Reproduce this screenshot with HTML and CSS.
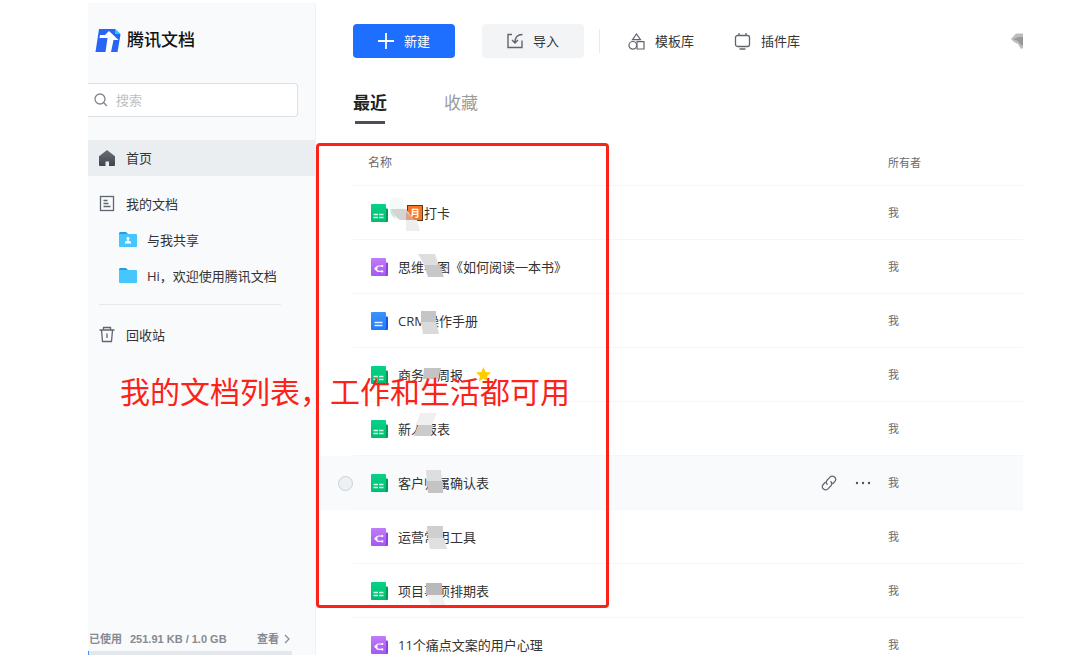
FILE: index.html
```html
<!DOCTYPE html>
<html lang="zh-CN">
<head>
<meta charset="utf-8">
<title>腾讯文档</title>
<link rel="stylesheet" href="styles.css">
</head>
<body>
<svg class="defs" aria-hidden="true">
  <defs>
    <linearGradient id="g-green" x1="0" y1="0" x2="0" y2="1"><stop offset="0" stop-color="#08d288"/><stop offset="1" stop-color="#00bd70"/></linearGradient>
    <linearGradient id="g-purple" x1="0" y1="0" x2="0" y2="1"><stop offset="0" stop-color="#c07bfb"/><stop offset="1" stop-color="#a558f2"/></linearGradient>
    <linearGradient id="g-blue" x1="0" y1="0" x2="0" y2="1"><stop offset="0" stop-color="#3c93ff"/><stop offset="1" stop-color="#217afa"/></linearGradient>
    <linearGradient id="g-home" x1="0" y1="0" x2="0" y2="1"><stop offset="0" stop-color="#6b7079"/><stop offset="1" stop-color="#3f444d"/></linearGradient>
    <symbol id="sheet" viewBox="0 0 17 18">
      <path d="M14 4.500h2a1 1 0 0 1 1 1V17a1 1 0 0 1-1 1H9z" fill="#009c57"/>
      <path d="M1 0h13a1 1 0 0 1 1 1v16l-1 1H1a1 1 0 0 1-1-1V1a1 1 0 0 1 1-1z" fill="url(#g-green)"/>
      <path d="M2.500 10.500h4.500M8 10.500h4.500M2.500 13.500h4.500M8 13.500h4.500" stroke="#d5fbe8" stroke-width="1.700"/>
    </symbol>
    <symbol id="mind" viewBox="0 0 17 18">
      <path d="M14 4.500h2a1 1 0 0 1 1 1V17a1 1 0 0 1-1 1H9z" fill="#8c41dc"/>
      <path d="M1 0h13a1 1 0 0 1 1 1v16l-1 1H1a1 1 0 0 1-1-1V1a1 1 0 0 1 1-1z" fill="url(#g-purple)"/>
      <path d="M11 8H8a2.700 2.700 0 0 0 0 5.400h3" fill="none" stroke="#fff" stroke-width="1.200"/>
      <circle cx="5" cy="10.700" r="1.600" fill="#fff"/><circle cx="11.300" cy="8" r="1.100" fill="#fff"/><circle cx="11.300" cy="13.400" r="1.100" fill="#fff"/>
    </symbol>
    <symbol id="doc" viewBox="0 0 17 18">
      <path d="M14 4.500h2a1 1 0 0 1 1 1V17a1 1 0 0 1-1 1H9z" fill="#1259e6"/>
      <path d="M1 0h13a1 1 0 0 1 1 1v16l-1 1H1a1 1 0 0 1-1-1V1a1 1 0 0 1 1-1z" fill="url(#g-blue)"/>
      <path d="M3.500 10.500h8M3.500 13.500h8" stroke="#e3f0ff" stroke-width="1.400"/>
    </symbol>
  </defs>
</svg>
<div class="app">
  <aside class="sidebar">
    <a class="brand" href="#">
      <svg width="27" height="25" viewBox="0 0 27 25" aria-hidden="true">
        <path d="M4 1h16l5.500 5.500L22.500 24H.5z" fill="#2864f5"/>
        <path d="M20 1l5.500 5H20z" fill="#12d5e8"/>
        <path d="M14 3l9.500 9h-5L16 24h-5.500l2-14H4.500l.5-3h5z" fill="#fff"/>
      </svg>
      <span>腾讯文档</span>
    </a>
    <label class="search">
      <svg width="14" height="14" viewBox="0 0 14 14" fill="none" stroke="#80858e" stroke-width="1.300" aria-hidden="true"><circle cx="6" cy="6" r="5"/><path d="M9.700 9.700l3.300 3.300"/></svg>
      <input type="text" placeholder="搜索" aria-label="搜索">
    </label>
    <nav class="nav">
      <a class="nav-item active" href="#">
        <svg width="18" height="18" viewBox="0 0 18 18" aria-hidden="true"><path d="M9 1l8 6.300V16a1 1 0 0 1-1 1h-5v-4.500H7.500V17H2a1 1 0 0 1-1-1V7.300z" fill="url(#g-home)"/></svg>
        首页
      </a>
      <a class="nav-item" href="#">
        <svg width="18" height="18" viewBox="0 0 18 18" fill="none" stroke="#60656f" stroke-width="1.300" aria-hidden="true"><rect x="2.500" y="1.500" width="13" height="14"/><path d="M5.500 5.500h4M5.500 8.500h5M5.500 11.500h7"/></svg>
        我的文档
      </a>
      <a class="nav-item child" href="#">
        <svg width="18" height="18" viewBox="0 0 18 18" aria-hidden="true"><path d="M1 1h6l2 2v4H0V2z" fill="#1b9df0"/><path d="M0 3h17a1 1 0 0 1 1 1V15a1 1 0 0 1-1 1H1a1 1 0 0 1-1-1z" fill="#45c6fd"/><circle cx="9" cy="7.500" r="1.400" fill="#fff"/><path d="M8.300 8h1.400v1.700l2.300 1V12.500H6V10.700l2.300-1z" fill="#fff"/></svg>
        与我共享
      </a>
      <a class="nav-item child" href="#">
        <svg width="18" height="18" viewBox="0 0 18 18" aria-hidden="true"><path d="M1 1h6l2 2v4H0V2z" fill="#1b9df0"/><path d="M0 3h17a1 1 0 0 1 1 1V15a1 1 0 0 1-1 1H1a1 1 0 0 1-1-1z" fill="#45c6fd"/></svg>
        Hi，欢迎使用腾讯文档
      </a>
      <hr class="nav-line">
      <a class="nav-item" href="#">
        <svg width="18" height="18" viewBox="0 0 18 18" fill="none" stroke="#60656f" stroke-width="1.300" aria-hidden="true"><path d="M1.500 4h15M5.500 4V1.500h7V4M3.500 4l1 11.500h9l1-11.500M9 7.500V12"/></svg>
        回收站
      </a>
    </nav>
    <div class="usage">
      <div class="usage-row">
        <label for="quota">已使用</label>
        <span>251.91 KB / 1.0 GB</span>
        <a class="usage-link" href="#">查看
          <svg width="6" height="10" viewBox="0 0 6 10" fill="none" stroke="#858a93" stroke-width="1.200" aria-hidden="true"><path d="M1 1l4 4-4 4"/></svg>
        </a>
      </div>
      <progress id="quota" class="quota" value="1" max="204"></progress>
    </div>
  </aside>
  <main class="main">
    <header class="toolbar">
      <button class="btn primary" type="button">
        <svg width="16" height="16" viewBox="0 0 16 16" stroke="#fff" stroke-width="1.800" aria-hidden="true"><path d="M8 0v16M0 8h16"/></svg>
        新建
      </button>
      <button class="btn" type="button">
        <svg width="16" height="16" viewBox="0 0 16 16" fill="none" stroke="#60656f" stroke-width="1.400" aria-hidden="true"><path d="M5 1.500H1v13h14V7.500M15.500 1.500C11 1.500 8 3.500 8 9.500M5 7l3 3 3-3"/></svg>
        导入
      </button>
      <span class="split"></span>
      <button class="tool" type="button">
        <svg width="17" height="17" viewBox="0 0 17 17" fill="none" stroke="#60656f" stroke-width="1.200" aria-hidden="true"><path d="M8.500 1l4 5.700h-8zM9 8.700h7V16H9z"/><circle cx="4.800" cy="12.300" r="3.800" fill="#fff"/></svg>
        模板库
      </button>
      <button class="tool" type="button">
        <svg width="17" height="17" viewBox="0 0 17 17" fill="none" stroke="#60656f" stroke-width="1.300" aria-hidden="true"><rect x="1.500" y="2.500" width="14" height="11" rx="2"/><path d="M5 0v3M12 0v3M5.500 16h6"/></svg>
        插件库
      </button>
      <svg class="avatar" width="12" height="16" viewBox="0 0 12 16" aria-hidden="true"><path d="M0 6l5-5.500h7V15l-2 1-3-5-4-2z" fill="#bdbdbd"/><path d="M2 6l6-2h4v9l-3-2-2-3z" fill="#999"/></svg>
    </header>
    <div class="tabs">
      <button class="tab current" type="button">最近</button>
      <button class="tab" type="button">收藏</button>
    </div>
    <table class="files">
      <thead>
        <tr><td class="pick"></td><th class="name-head">名称</th><td class="actions"></td><th class="owner">所有者</th></tr>
      </thead>
      <tbody>
        <tr>
          <td class="pick"></td>
          <td><div class="file"><svg class="kind"><use href="#sheet"/></svg><span class="month">月</span><span>打卡</span>
            <svg class="blot" viewBox="370 187 100 54" aria-hidden="true"><path d="M390 200q6-6 14 0v9h-14z" fill="#f5faf7"/><path d="M390 208l6 11q-6-3-6-11z" fill="#b9efd4"/><path d="M391 209h15l8 11h-14q-7-4-9-11z" fill="#d4d4d4"/><path d="M406 212l9 8h-9z" fill="#d9a58a"/><path d="M406 220h11l3 11h-14z" fill="#eee"/></svg></div></td>
          <td class="actions"></td><td class="owner">我</td>
        </tr>
        <tr>
          <td class="pick"></td>
          <td><div class="file"><svg class="kind"><use href="#mind"/></svg><span>思维导图《如何阅读一本书》</span>
            <svg class="blot" viewBox="370 241 100 54" aria-hidden="true"><path d="M418 254h17l4 12h-14z" fill="#dedede"/><path d="M424 265h15l5 12h-16z" fill="#c7c7c7"/></svg></div></td>
          <td class="actions"></td><td class="owner">我</td>
        </tr>
        <tr>
          <td class="pick"></td>
          <td><div class="file"><svg class="kind"><use href="#doc"/></svg><span>CRM操作手册</span>
            <svg class="blot" viewBox="370 295 100 54" aria-hidden="true"><path d="M421 311h15v11h-15z" fill="#c5c5c5"/><path d="M421 322h15l3 12h-16z" fill="#dadada"/></svg></div></td>
          <td class="actions"></td><td class="owner">我</td>
        </tr>
        <tr>
          <td class="pick"></td>
          <td><div class="file"><svg class="kind"><use href="#sheet"/></svg><span>商务部周报</span>
            <svg class="star" width="15" height="15" viewBox="0 0 15 15" aria-label="已收藏"><path d="M7.500 0l2.200 5 5.300.5-4 3.600 1.200 5.400-4.700-2.800-4.700 2.800L4 9.100 0 5.500 5.300 5z" fill="#ffcd00"/></svg>
            <svg class="blot" viewBox="370 349 100 54" aria-hidden="true"><path d="M424 368h17l-3 11h-15z" fill="#c4c4c4"/><path d="M423 379h15l-5 11h-12z" fill="#f4f4f4"/></svg></div></td>
          <td class="actions"></td><td class="owner">我</td>
        </tr>
        <tr>
          <td class="pick"></td>
          <td><div class="file"><svg class="kind"><use href="#sheet"/></svg><span>新人报表</span>
            <svg class="blot" viewBox="370 403 100 54" aria-hidden="true"><path d="M420 413h17l-5 12h-16z" fill="#f0f0f0"/><path d="M418 425h15l-2 11h-17z" fill="#cbcbcb"/></svg></div></td>
          <td class="actions"></td><td class="owner">我</td>
        </tr>
        <tr class="hovered">
          <td class="pick"><input class="check" type="checkbox" aria-label="选择客户归属确认表"></td>
          <td><div class="file"><svg class="kind"><use href="#sheet"/></svg><span>客户归属确认表</span>
            <svg class="blot" viewBox="370 457 100 54" aria-hidden="true"><path d="M426 470h15l1 11h-15z" fill="#dedede"/><path d="M427 481h16v12h-15z" fill="#c4c4c4"/></svg></div></td>
          <td class="actions"><div class="action-list">
            <button class="icon-btn" type="button" aria-label="复制链接"><svg width="16" height="16" viewBox="0 0 16 16" fill="none" stroke="#60656f" stroke-width="1.200"><path d="M6.500 9.800C4.800 8.300 5 6.300 6.300 5L9 2.200c3-3 7.500 1 4.800 4.300L11.500 9M9.500 6.200c1.700 1.500 1.500 3.500.2 4.800L7 13.800c-3 3-7.500-1-4.800-4.300L4.500 7"/></svg></button>
            <button class="icon-btn" type="button" aria-label="更多"><svg width="16" height="16" viewBox="0 0 16 16" fill="#4f545d"><circle cx="2" cy="8" r="1.200"/><circle cx="8" cy="8" r="1.200"/><circle cx="14" cy="8" r="1.200"/></svg></button>
          </div></td><td class="owner">我</td>
        </tr>
        <tr>
          <td class="pick"></td>
          <td><div class="file"><svg class="kind"><use href="#mind"/></svg><span>运营常用工具</span>
            <svg class="blot" viewBox="370 511 100 54" aria-hidden="true"><path d="M427 526h16v12h-15z" fill="#cfcfcf"/><path d="M428 538h16l3 11h-17z" fill="#e0e0e0"/></svg></div></td>
          <td class="actions"></td><td class="owner">我</td>
        </tr>
        <tr>
          <td class="pick"></td>
          <td><div class="file"><svg class="kind"><use href="#sheet"/></svg><span>项目事项排期表</span>
            <svg class="blot" viewBox="370 565 100 54" aria-hidden="true"><path d="M426 583h16v12h-16z" fill="#b9b9b9"/><path d="M427 595h15l4 11h-15z" fill="#f1f1f1"/></svg></div></td>
          <td class="actions"></td><td class="owner">我</td>
        </tr>
        <tr>
          <td class="pick"></td>
          <td><div class="file"><svg class="kind"><use href="#mind"/></svg><span>11个痛点文案的用户心理</span></div></td>
          <td class="actions"></td><td class="owner">我</td>
        </tr>
      </tbody>
    </table>
  </main>
  <div class="frame"></div>
  <p class="note">我的文档列表，工作和生活都可用</p>
</div>
</body>
</html>
```

FILE: styles.css
```css
* { box-sizing: border-box; }

body {
  margin: 0;
  padding: 3px 57px 0 88px;
  height: 100vh;
  overflow: hidden;
  background: #fff;
  color: #333;
  font: 13px/20px "Open Sans", "Noto Sans CJK SC", sans-serif;
}

a { color: inherit; text-decoration: none; }
button { padding: 0; border: 0; background: none; color: inherit; font: inherit; }
svg { display: block; flex: none; }
.defs { position: absolute; width: 0; height: 0; }

.app { position: relative; display: flex; height: 100%; }

.sidebar {
  display: flex;
  flex-direction: column;
  flex: none;
  width: 228px;
  background: #f9fafc;
  border-right: 1px solid #eff1f3;
}

.brand {
  display: flex;
  align-items: center;
  gap: 5px;
  height: 30px;
  margin: 22px 0 28px 7px;
  color: #111;
  font-size: 17px;
  font-weight: 500;
}

.search {
  display: flex;
  align-items: center;
  gap: 8px;
  height: 34px;
  margin-right: 17px;
  padding-left: 6px;
  background: #fff;
  border: 1px solid #dfe1e5;
  border-left: 0;
  border-radius: 0 4px 4px 0;
}
.search input {
  flex: 1;
  min-width: 0;
  padding: 0;
  border: 0;
  outline: 0;
  background: none;
  font: inherit;
}
.search input::placeholder { color: #bdbfc4; }

.nav { padding-top: 23px; }
.nav-item {
  display: flex;
  align-items: center;
  gap: 10px;
  height: 36px;
  padding-left: 10px;
  white-space: nowrap;
}
.nav-item.active { margin-bottom: 10px; background: #ebeef1; }
.nav-item.child { padding-left: 31px; }
.nav-line { height: 1px; margin: 10px 34px 12px 11px; border: 0; background: #e6e9ec; }

.usage {
  margin-top: auto;
  color: #858a93;
  font: bold 11px/16px "Liberation Sans", "Noto Sans CJK SC", sans-serif;
}
.usage-row { display: flex; gap: 8px; padding: 0 25px 4px 1px; white-space: nowrap; }
.usage-link { display: flex; align-items: center; gap: 5px; margin-left: auto; }
.quota {
  display: block;
  width: 204px;
  height: 4px;
  appearance: none;
  border: 0;
}
.quota::-webkit-progress-bar { background: #e4e8ec; }
.quota::-webkit-progress-value { background: #4a8fff; }

.main { flex: 1; min-width: 0; padding: 21px 0 0 4px; overflow: hidden; }

.toolbar { display: flex; align-items: center; padding-left: 33px; }
.btn, .tool { display: flex; align-items: center; justify-content: center; gap: 10px; white-space: nowrap; }
.btn { width: 102px; height: 34px; margin-right: 27px; border-radius: 4px; background: #f3f4f6; }
.btn + .split { margin-left: -12px; }
.btn.primary { background: #1e6fff; color: #fff; }
.split { width: 1px; height: 24px; margin-right: 28px; background: #e8eaec; }
.tool { margin-right: 40px; }
.avatar { margin-left: auto; }

.tabs { display: flex; gap: 57px; padding: 30px 0 0 33px; font-size: 17px; line-height: 30px; }
.tab { color: #9b9b9b; }
.tab::after { content: ""; display: block; width: 30px; height: 3px; margin: 3px auto 0; }
.tab.current { color: #222; font-weight: 700; }
.tab.current::after { background: #4a4f5a; }

.files {
  width: 100%;
  margin-top: 16px;
  border-collapse: separate;
  border-spacing: 0;
  table-layout: fixed;
}
.files th, .files td { height: 54px; padding: 0; border-bottom: 1px solid #f5f6f7; text-align: left; }
.files thead th, .files thead td { height: 46px; }
.files th { color: #6b6b6b; font-size: 12px; font-weight: 400; }
.files .pick { width: 33px; border-bottom: 0; }
.files .name-head { padding-left: 15px; }
.files .actions { width: 67px; }
.files .owner { width: 135px; color: #6b6b6b; font-size: 11px; }
.files .hovered td { background: #f9fafc; }

.check {
  display: block;
  width: 15px;
  height: 15px;
  margin: 0 0 0 18px;
  appearance: none;
  border: 1px solid #cdd1d5;
  border-radius: 50%;
  background: #eef1f3;
}

.file { position: relative; display: flex; align-items: center; height: 53px; padding-left: 18px; white-space: nowrap; }
.kind { width: 17px; height: 18px; margin-right: 10px; }
.star { margin-left: 13px; }
.blot { position: absolute; left: 17px; top: 1px; width: 100px; height: 54px; overflow: visible; }
.month {
  width: 16px;
  height: 16px;
  margin: 0 1px 0 9px;
  border: 1px solid #5b3a24;
  background: #f97428;
  color: #fff;
  font-size: 10px;
  font-weight: 700;
  line-height: 14px;
  text-align: center;
}

.action-list { display: flex; gap: 18px; }
.icon-btn { display: block; }

.frame {
  position: absolute;
  left: 228px;
  top: 140px;
  width: 293px;
  height: 465px;
  border: 3px solid #fc2218;
  border-radius: 4px;
}
.note {
  position: absolute;
  left: 32px;
  top: 367px;
  margin: 0;
  color: #fc2218;
  font-size: 30px;
  line-height: 44px;
  white-space: nowrap;
}
```
